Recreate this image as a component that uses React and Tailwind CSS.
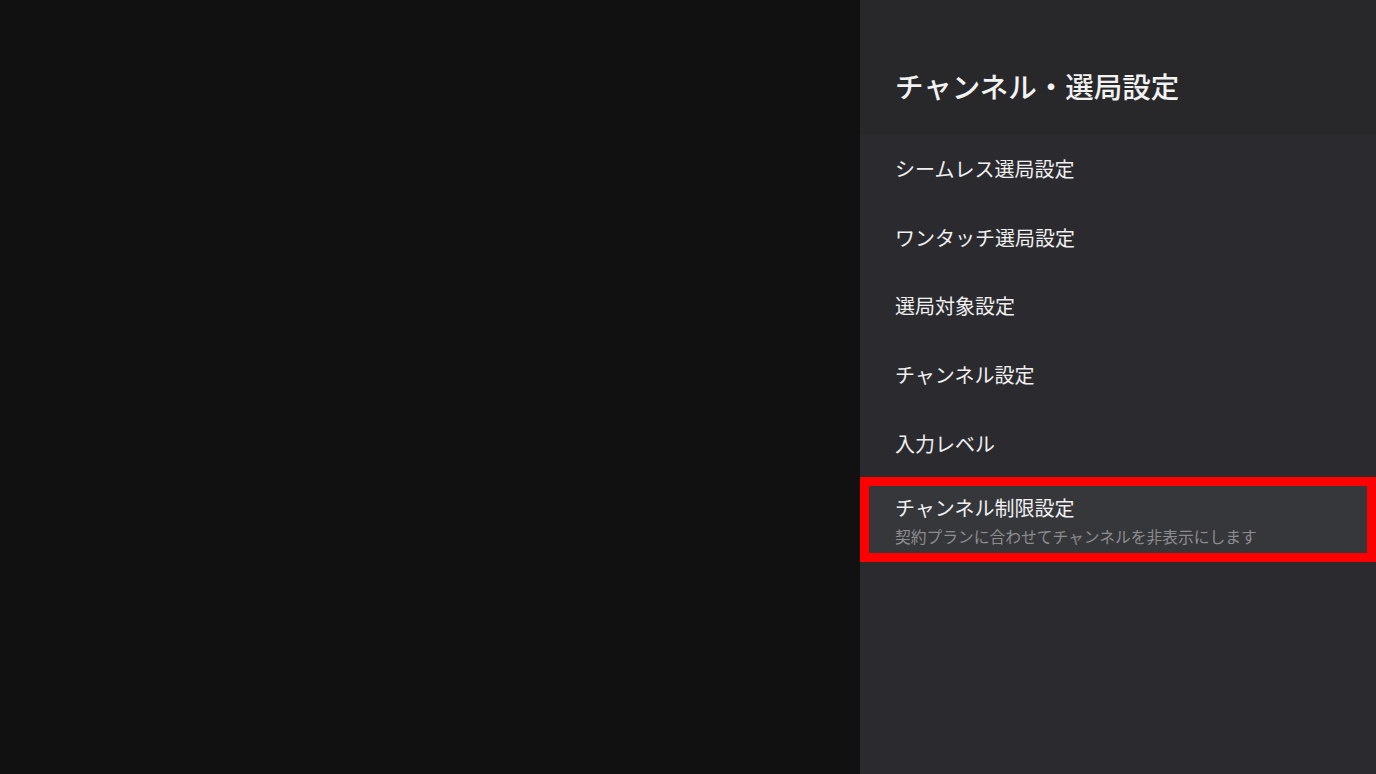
import React from 'react';

const items = [
    'シームレス選局設定',
    'ワンタッチ選局設定',
    '選局対象設定',
    'チャンネル設定',
    '入力レベル',
];

const App = () => {
    return (
        <div
            className="w-[1376px] h-[774px] flex bg-[#111111] overflow-hidden"
            style={{ fontFamily: '"Noto Sans CJK JP", "Noto Sans", sans-serif' }}
        >
            <div className="flex-1" />
            <div className="w-[516px] h-full bg-[#2b2b2f] flex flex-col">
                <div className="h-[134px] shrink-0 bg-[#28282b] pl-[35px] pt-[72px]">
                    <h1 className="text-[28.5px] font-medium text-[#f2f2f2] leading-none">チャンネル・選局設定</h1>
                </div>
                {items.map((label) => (
                    <div key={label} className="h-[68.8px] shrink-0 flex items-center pl-[35px] pt-[1px]">
                        <span className="text-[20px] text-[#f0f0f0] leading-none">{label}</span>
                    </div>
                ))}
                {/* 選択中の項目 */}
                <div className="-mt-[1px] h-[85px] shrink-0 border-[9px] border-[#ff0000] bg-[#36373b] flex flex-col pt-[12px] pl-[26px]">
                    <span className="text-[20px] text-[#f0f0f0] leading-none">チャンネル制限設定</span>
                    <span className="mt-[11px] text-[15.75px] text-[#8d8d90] leading-none">契約プランに合わせてチャンネルを非表示にします</span>
                </div>
            </div>
        </div>
    );
};

export default App;
